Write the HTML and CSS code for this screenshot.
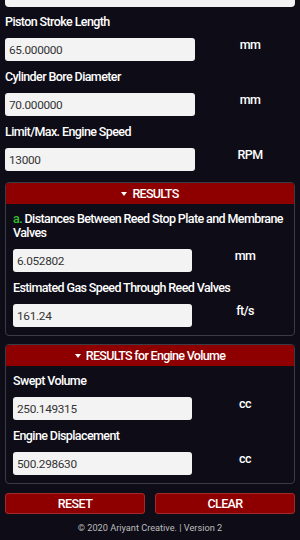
FILE: index.html
```html
<!DOCTYPE html>
<html lang="en">
<head>
    <meta charset="UTF-8">
    <meta name="viewport" content="width=device-width, initial-scale=1.0">
    <title>Reed Valve Calculator</title>
    <link rel="stylesheet" href="styles.css">
</head>
<body>
    <div class="top-strip"></div>

    <div class="field">
        <label>Piston Stroke Length</label>
        <div class="row">
            <input type="text" value="65.000000">
            <span class="unit">mm</span>
        </div>
    </div>

    <div class="field">
        <label>Cylinder Bore Diameter</label>
        <div class="row">
            <input type="text" value="70.000000">
            <span class="unit">mm</span>
        </div>
    </div>

    <div class="field">
        <label>Limit/Max. Engine Speed</label>
        <div class="row">
            <input type="text" value="13000">
            <span class="unit">RPM</span>
        </div>
    </div>

    <div class="panel">
        <div class="panel-head"><span class="caret"></span>RESULTS</div>
        <div class="panel-body">
            <div class="field">
                <label><span class="mark">a.</span> Distances Between Reed Stop Plate and Membrane Valves</label>
                <div class="row">
                    <input type="text" value="6.052802" readonly>
                    <span class="unit">mm</span>
                </div>
            </div>
            <div class="field">
                <label>Estimated Gas Speed Through Reed Valves</label>
                <div class="row">
                    <input type="text" value="161.24" readonly>
                    <span class="unit">ft/s</span>
                </div>
            </div>
        </div>
    </div>

    <div class="panel">
        <div class="panel-head"><span class="caret"></span>RESULTS for Engine Volume</div>
        <div class="panel-body">
            <div class="field">
                <label>Swept Volume</label>
                <div class="row">
                    <input type="text" value="250.149315" readonly>
                    <span class="unit">cc</span>
                </div>
            </div>
            <div class="field">
                <label>Engine Displacement</label>
                <div class="row">
                    <input type="text" value="500.298630" readonly>
                    <span class="unit">cc</span>
                </div>
            </div>
        </div>
    </div>

    <div class="buttons">
        <button class="btn">RESET</button>
        <button class="btn">CLEAR</button>
    </div>

    <p class="footer">© 2020 Ariyant Creative. | Version 2</p>
</body>
</html>
```

FILE: styles.css
```css
* {
    margin: 0;
    padding: 0;
    box-sizing: border-box;
}

body {
    font-family: Roboto, 'Liberation Sans', sans-serif;
    background: #0e0d17;
    color: #fff;
    padding: 0 5px;
    width: 300px;
}

.top-strip {
    height: 7px;
    background: #f2f2f2;
    border-radius: 0 0 4px 4px;
    margin-bottom: 8px;
}

.field {
    margin-bottom: 9px;
}

.field label {
    display: block;
    font-size: 12.5px;
    font-weight: 500;
    line-height: 14px;
    letter-spacing: -0.6px;
    margin-bottom: 9px;
}

.mark {
    color: #2fc02f;
}

.row {
    display: grid;
    grid-template-columns: 190px 1fr;
    align-items: start;
}

.row input {
    height: 23px;
    border: none;
    border-radius: 3px;
    background: #f3f3f3;
    color: #333;
    font-family: Roboto, 'Liberation Sans', sans-serif;
    font-size: 11.8px;
    letter-spacing: -0.3px;
    padding: 0 4px;
    outline: none;
}

.unit {
    text-align: center;
    padding-left: 10px;
    font-size: 12.5px;
    font-weight: 500;
    line-height: 14px;
    letter-spacing: -0.6px;
}

.panel {
    border: 1px solid #3b3b45;
    border-radius: 4px;
    margin-top: 11px;
    overflow: hidden;
}

.panel + .panel {
    margin-top: 8px;
}

.panel-head {
    background: #8e0000;
    text-align: center;
    font-size: 12.5px;
    font-weight: 500;
    letter-spacing: -0.7px;
    height: 21px;
    line-height: 21px;
}

.caret {
    display: inline-block;
    width: 0;
    height: 0;
    border-left: 3px solid transparent;
    border-right: 3px solid transparent;
    border-top: 4px solid #fff;
    vertical-align: middle;
    margin-right: 5px;
    position: relative;
    top: -1px;
}

.panel-body {
    padding: 8px 6px 0 7px;
}

.panel-body .field:last-child {
    margin-bottom: 8px;
}

.panel-body .row {
    grid-template-columns: 179px 1fr;
}

.buttons {
    display: grid;
    grid-template-columns: 1fr 1fr;
    gap: 10px;
    margin-top: 9px;
}

.btn {
    height: 21px;
    background: #8e0000;
    border: 1px solid #a32a2a;
    border-radius: 3px;
    color: #fff;
    font-family: Roboto, 'Liberation Sans', sans-serif;
    font-size: 12.5px;
    font-weight: 500;
    letter-spacing: -0.6px;
    cursor: pointer;
}

.footer {
    text-align: center;
    font-size: 9.2px;
    color: #bdbdbd;
    margin-top: 8px;
}
```
